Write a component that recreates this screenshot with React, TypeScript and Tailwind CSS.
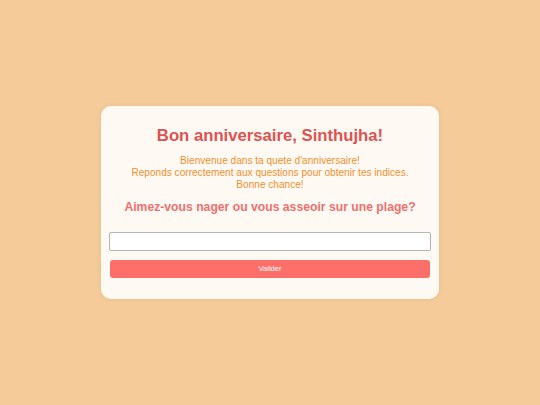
import { useState } from 'react';

const App = () => {
  const [answer, setAnswer] = useState('');

  return (
    <div className="flex min-h-screen items-center justify-center bg-[#f5cb9a] font-['Liberation_Sans',Arial,sans-serif]">
      <div className="w-[338px] rounded-[10px] bg-[#fff9f3] px-2 pt-[19px] pb-[21px] text-center shadow-[0_0_6px_rgba(0,0,0,0.06)]">
        <h1 className="text-[16.7px] leading-[21px] font-bold text-[#e05252]">Bon anniversaire, Sinthujha!</h1>
        <p className="mt-[9px] text-[10.1px] leading-[12px] text-[#f2902e]">
          Bienvenue dans ta quete d'anniversaire!
          <br />
          Reponds correctement aux questions pour obtenir tes indices.
          <br />
          Bonne chance!
        </p>
        <h2 className="mt-[9px] text-[12.2px] leading-[15px] font-bold text-[#f07070]">
          Aimez-vous nager ou vous asseoir sur une plage?
        </h2>
        <input
          value={answer}
          onChange={(e) => setAnswer(e.target.value)}
          className="mt-[17px] block h-[19px] w-full rounded-[2px] border border-[#b5b5b5] bg-white px-1 text-[11px] outline-none"
        />
        <div className="px-px">
          <button className="mt-[9px] block h-[18px] w-full rounded-[3px] bg-[#ff6f69] text-[7.5px] text-white">Valider</button>
        </div>
      </div>
    </div>
  );
};

export default App;
